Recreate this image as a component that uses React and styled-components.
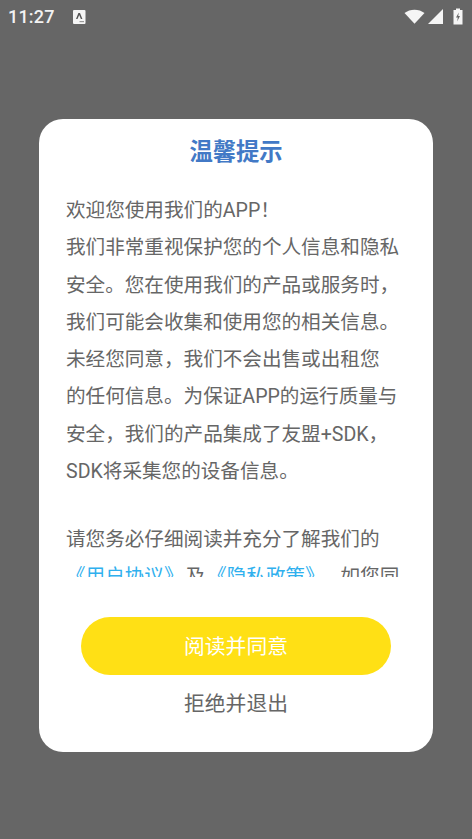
import React from 'react'
import styled, { createGlobalStyle } from 'styled-components'

const cjk = '"Roboto", "Noto Sans CJK SC", sans-serif'

const Global = createGlobalStyle`
  html, body { margin: 0; padding: 0; background: #666666; }
  body { font-family: ${cjk}; }
`

const Screen = styled.div`
  width: 472px;
  height: 839px;
  background: #666666;
  display: flex;
  flex-direction: column;
  overflow: hidden;
`

const StatusBar = styled.div`
  height: 33px;
  padding: 0 9px 0 8px;
  display: flex;
  align-items: center;
  color: #f2f2f2;
`

const Clock = styled.span`
  font-family: "Roboto", sans-serif;
  font-size: 18px;
  font-weight: 500;
  letter-spacing: 0.2px;
`

const NoticeIcon = styled.svg`
  width: 14px;
  height: 14px;
  margin-left: 17px;
`

const StatusIcons = styled.div`
  margin-left: auto;
  display: flex;
  align-items: center;
  gap: 3px;
`

const Dialog = styled.div`
  margin: 86px 39px 0;
  width: 394px;
  height: 633px;
  box-sizing: border-box;
  background: #ffffff;
  border-radius: 24px;
  display: flex;
  flex-direction: column;
  align-items: center;
`

const Title = styled.h1`
  margin: 18px 0 0;
  font-size: 23.3px;
  line-height: 30px;
  font-weight: 700;
  color: #4279c6;
  font-family: ${cjk};
`

const Body = styled.div`
  margin-top: 23px;
  align-self: stretch;
  box-sizing: border-box;
  padding: 2px 27px 0;
  height: 387px;
  overflow: hidden;
  font-family: ${cjk};
  font-size: 19.6px;
  line-height: 37.3px;
  color: #666666;
`

const Line = styled.div`
  white-space: nowrap;
  min-height: 30.5px;
`

const Link = styled.span`
  color: #2fb0ee;
`

const Joiner = styled.span`
  margin: 0 ${props => props.gap || 0}px;
`

const AcceptButton = styled.button`
  margin-top: 40px;
  width: 310px;
  height: 58px;
  padding: 0 0 3px;
  border: 0;
  border-radius: 29px;
  background: #ffe015;
  color: #ffffff;
  font-family: ${cjk};
  font-size: 20.8px;
`

const DeclineButton = styled.button`
  margin-top: 12px;
  padding: 0;
  border: 0;
  background: none;
  color: #666666;
  line-height: 34px;
  font-family: ${cjk};
  font-size: 20.8px;
`

const lines = [
  '欢迎您使用我们的APP！',
  '我们非常重视保护您的个人信息和隐私',
  '安全。您在使用我们的产品或服务时，',
  '我们可能会收集和使用您的相关信息。',
  '未经您同意，我们不会出售或出租您',
  '的任何信息。为保证APP的运行质量与',
  '安全，我们的产品集成了友盟+SDK，',
  'SDK将采集您的设备信息。',
  '',
  '请您务必仔细阅读并充分了解我们的',
]

export default function App() {
  return (
    <Screen>
      <Global />
      <StatusBar>
        <Clock>11:27</Clock>
        <NoticeIcon viewBox="0 0 14 14">
          <rect x="1" y="0" width="12.5" height="14" rx="1" fill="#f5f5f5" />
          <path d="M4 9 L6.4 3 H8 L10.4 9 H8.9 L7.2 5 L5.5 9 Z" fill="#555" />
          <rect x="7.5" y="11" width="4.5" height="1.2" fill="#999" />
        </NoticeIcon>
        <StatusIcons>
          <svg width="21" height="15" viewBox="0 0 21 15">
            <path d="M0.5 4 C6 -0.5 15 -0.5 20.5 4 L10.5 14.8 Z" fill="#f5f5f5" />
          </svg>
          <svg width="15" height="15" viewBox="0 0 15 15">
            <path d="M0 15 L15 0 V15 Z" fill="#f5f5f5" />
          </svg>
          <svg width="10" height="17" viewBox="0 0 10 17" style={{ marginLeft: 7 }}>
            <path d="M3 0.5 H7 V2 H9.5 V16.5 H0.5 V2 H3 Z" fill="#f5f5f5" />
            <path d="M5.8 4.5 L3 9.5 H4.8 L4.2 13.5 L7 8 H5.2 Z" fill="#666" />
          </svg>
        </StatusIcons>
      </StatusBar>
      <Dialog>
        <Title>温馨提示</Title>
        <Body>
          {lines.map((text, i) => (
            <Line key={i}>{text}</Line>
          ))}
          <Line>
            <Link>《用户协议》</Link>
            <Joiner gap="2">及</Joiner>
            <Link>《隐私政策》</Link>
            <Joiner gap="6">，如您同</Joiner>
          </Line>
        </Body>
        <AcceptButton>阅读并同意</AcceptButton>
        <DeclineButton>拒绝并退出</DeclineButton>
      </Dialog>
    </Screen>
  )
}
